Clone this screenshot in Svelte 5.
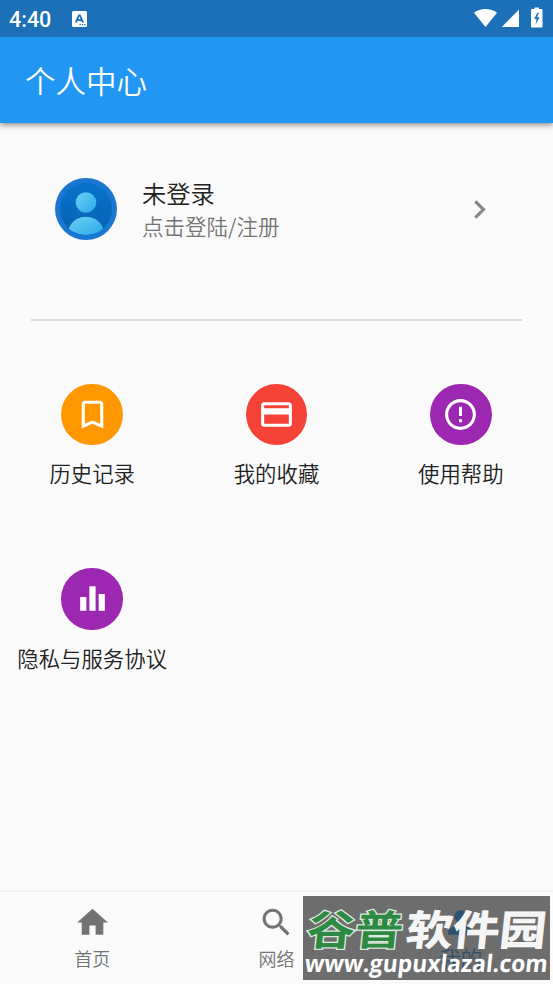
<script lang="ts">
	type Entry = { label: string; color: string; icon: string };

	const entries: Entry[] = [
		{
			label: '历史记录',
			color: '#ff9800',
			icon: 'M17 3H7c-1.1 0-1.99.9-1.99 2L5 21l7-3 7 3V5c0-1.1-.9-2-2-2zm0 15l-5-2.18L7 18V5h10v13z'
		},
		{
			label: '我的收藏',
			color: '#f44336',
			icon: 'M20 4H4c-1.11 0-1.99.89-1.99 2L2 18c0 1.11.89 2 2 2h16c1.11 0 2-.89 2-2V6c0-1.11-.89-2-2-2zm0 14H4v-6h16v6zm0-10H4V6h16v2z'
		},
		{
			label: '使用帮助',
			color: '#9c27b0',
			icon: 'M11 15h2v2h-2zm0-8h2v6h-2zm.99-5C6.47 2 2 6.48 2 12s4.47 10 9.99 10C17.52 22 22 17.52 22 12S17.52 2 11.99 2zM12 20c-4.42 0-8-3.58-8-8s3.58-8 8-8 8 3.58 8 8-3.58 8-8 8z'
		},
		{
			label: '隐私与服务协议',
			color: '#9c27b0',
			icon: 'M4 11h4v9H4zm6-7h4v16h-4zm6 5h4v11h-4z'
		}
	];

	const tabs = [
		{ label: '首页', icon: 'M10 20v-6h4v6h5v-8h3L12 3 2 12h3v8z' },
		{
			label: '网络',
			icon: 'M15.5 14h-.79l-.28-.27C15.41 12.59 16 11.11 16 9.5 16 5.91 13.09 3 9.5 3S3 5.91 3 9.5 5.91 16 9.5 16c1.61 0 3.09-.59 4.23-1.57l.27.28v.79l5 4.99L20.49 19l-4.99-5zm-6 0C7.01 14 5 11.99 5 9.5S7.01 5 9.5 5 14 7.01 14 9.5 11.99 14 9.5 14z'
		},
		{
			label: '我的',
			icon: 'M12 12c2.21 0 4-1.79 4-4s-1.79-4-4-4-4 1.79-4 4 1.79 4 4 4zm0 2c-2.67 0-8 1.34-8 4v2h16v-2c0-2.66-5.33-4-8-4z'
		}
	];

	let active = $state(2);
</script>

<div class="screen">
	<div class="status">
		<span class="time">4:40</span>
		<svg class="keyboard" viewBox="0 0 15 16">
			<rect width="15" height="16" rx="1.5" fill="#fff" />
			<path d="M2.8 11.5 6.3 3.5h2.2L12 11.5H9.9l-.6-1.6H5.5l-.6 1.6zM6.2 8.3h2.4L7.4 5.3z" fill="#1b70b7" />
			<path d="M7.5 13h1.3v1.2H7.5zm2.4 0h1.3v1.2H9.9zm2.3 0h1.3v1.2h-1.3z" fill="#1b70b7" />
		</svg>
		<svg class="signals" viewBox="0 0 70 20" fill="#fff">
			<path d="M0 3.7C6.5-1.2 16.5-1.2 23 3.7L11.5 18z" />
			<path d="M45 .6V18H27.8z" />
			<path
				fill-rule="evenodd"
				d="M60.5 0V-1.5h4.5V0h2.5q1 0 1 1v16.500q0 1-1 1H58q-1 0-1-1V1q0-1 1-1zm3 3.500-3.300 6.500h2.400l-1 5.500 4-7.300h-2.400l1.600-4.700z"
			/>
		</svg>
	</div>

	<header>个人中心</header>

	<main>
		<div class="profile">
			<svg class="avatar" viewBox="0 0 62 62">
				<defs>
					<linearGradient id="skin" x1="0" y1="0" x2="1" y2="1">
						<stop offset="0" stop-color="#6fd3f7" />
						<stop offset="1" stop-color="#28a9e6" />
					</linearGradient>
					<linearGradient id="disc" x1="0" y1="0" x2="0" y2="1">
						<stop offset="0" stop-color="#0873cb" />
						<stop offset="1" stop-color="#0761b3" />
					</linearGradient>
					<clipPath id="inner"><circle cx="31" cy="31" r="26" /></clipPath>
				</defs>
				<circle cx="31" cy="31" r="31" fill="#1976d2" />
				<circle cx="31" cy="31" r="26" fill="url(#disc)" />
				<circle cx="31" cy="24.5" r="10.3" fill="url(#skin)" />
				<path d="M13.5 51C17 42.5 23 38.7 31 38.7S45 42.5 48.5 51C39 59 23 59 13.5 51z" fill="url(#skin)" clip-path="url(#inner)" />
			</svg>
			<div class="who">
				<div class="name">未登录</div>
				<div class="hint">点击登陆/注册</div>
			</div>
			<svg class="chevron" viewBox="0 0 24 24">
				<path d="M10 6 8.59 7.41 13.17 12l-4.58 4.59L10 18l6-6z" />
			</svg>
		</div>

		<hr />

		<div class="grid">
			{#each entries as entry}
				<div class="entry">
					<div class="bubble" style:background={entry.color}>
						<svg viewBox="0 0 24 24"><path d={entry.icon} /></svg>
					</div>
					<span>{entry.label}</span>
				</div>
			{/each}
		</div>
	</main>

	<nav>
		{#each tabs as tab, i}
			<button class:active={active === i} onclick={() => (active = i)}>
				<svg viewBox="0 0 24 24"><path d={tab.icon} /></svg>
				<span>{tab.label}</span>
			</button>
		{/each}
	</nav>

	<div class="stamp">
		<svg viewBox="0 0 247 84">
			<g transform="skewX(-6)">
				<text class="brand green" x="8" y="49" textLength="96" lengthAdjust="spacingAndGlyphs">谷普</text>
				<text class="brand white" x="107" y="49" textLength="140" lengthAdjust="spacingAndGlyphs">软件园</text>
				<text class="url" x="9" y="76" textLength="243" lengthAdjust="spacingAndGlyphs">www.gupuxlazal.com</text>
			</g>
		</svg>
	</div>
</div>

<style>
	:global(body) {
		margin: 0;
		background: #fafafa;
	}

	.screen {
		display: flex;
		flex-direction: column;
		height: 984px;
		overflow: hidden;
		position: relative;
		background: #fafafa;
		color: #212121;
		font-family: 'Noto Sans CJK SC', sans-serif;
		font-weight: 350;
	}

	.status {
		display: flex;
		align-items: center;
		flex: none;
		height: 37px;
		box-sizing: border-box;
		padding: 0 9px;
		position: relative;
		z-index: 1;
		background: #1b70b7;
	}

	.time {
		width: 63px;
		padding-top: 1px;
		color: #fff;
		font: 500 21.5px Roboto, sans-serif;
	}

	.keyboard {
		width: 15px;
		height: 16px;
	}

	.signals {
		width: 70px;
		height: 20px;
		margin-left: auto;
		overflow: visible;
	}

	header {
		flex: none;
		height: 86px;
		padding-left: 25px;
		background: #2196f3;
		box-shadow: 0 2px 6px rgba(0, 0, 0, 0.45);
		color: #fff;
		font-size: 30.5px;
		line-height: 86px;
	}

	main {
		flex: 1;
	}

	.profile {
		display: flex;
		align-items: center;
		height: 172px;
		padding: 0 55px;
	}

	.avatar {
		width: 62px;
		height: 62px;
	}

	.who {
		flex: 1;
		padding-left: 25px;
	}

	.name {
		font-size: 24.3px;
		line-height: 34px;
	}

	.hint {
		color: #757575;
		font-size: 21.5px;
		line-height: 32px;
	}

	.chevron {
		width: 37px;
		height: 37px;
		fill: #868686;
	}

	hr {
		height: 2px;
		margin: 24px 31px 0;
		border: 0;
		background: #d9d9d9;
	}

	.grid {
		display: grid;
		grid-template-columns: repeat(3, 1fr);
		grid-auto-rows: 184.5px;
		padding-top: 62.5px;
	}

	.entry {
		display: flex;
		flex-direction: column;
		align-items: center;
		font-size: 21.4px;
		line-height: 32px;
		gap: 12px;
	}

	.bubble {
		display: flex;
		align-items: center;
		justify-content: center;
		width: 61.5px;
		height: 61.5px;
		border-radius: 50%;
	}

	.bubble svg {
		width: 37px;
		height: 37px;
		fill: #fff;
	}

	nav {
		display: flex;
		flex: none;
		height: 92px;
		background: #fafafa;
		box-shadow: 0 -1px 3px rgba(0, 0, 0, 0.08);
	}

	button {
		display: flex;
		flex: 1;
		flex-direction: column;
		align-items: center;
		padding: 12px 0 0;
		border: 0;
		background: none;
		color: #737373;
		font-family: inherit;
		font-size: 18px;
		font-weight: 350;
		line-height: 26px;
		gap: 4px;
	}

	button svg {
		width: 37px;
		height: 37px;
		fill: currentColor;
	}

	.active {
		color: #2196f3;
		font-size: 21.5px;
	}

	.stamp {
		position: absolute;
		left: 303px;
		top: 896px;
		width: 247px;
		height: 84px;
		background: rgba(54, 54, 54, 0.72);
	}

	.stamp svg {
		display: block;
		overflow: visible;
	}

	.brand {
		font-size: 41px;
		font-weight: 700;
	}

	.green {
		fill: #2d8a43;
		stroke: #dfeadf;
		stroke-width: 2.5px;
		paint-order: stroke;
	}

	.white {
		fill: #fff;
		fill-opacity: 0.94;
		stroke: #fff;
		stroke-width: 0.6px;
	}

	.url {
		fill: #fff;
		font: 700 24px 'Open Sans', sans-serif;
	}
</style>
